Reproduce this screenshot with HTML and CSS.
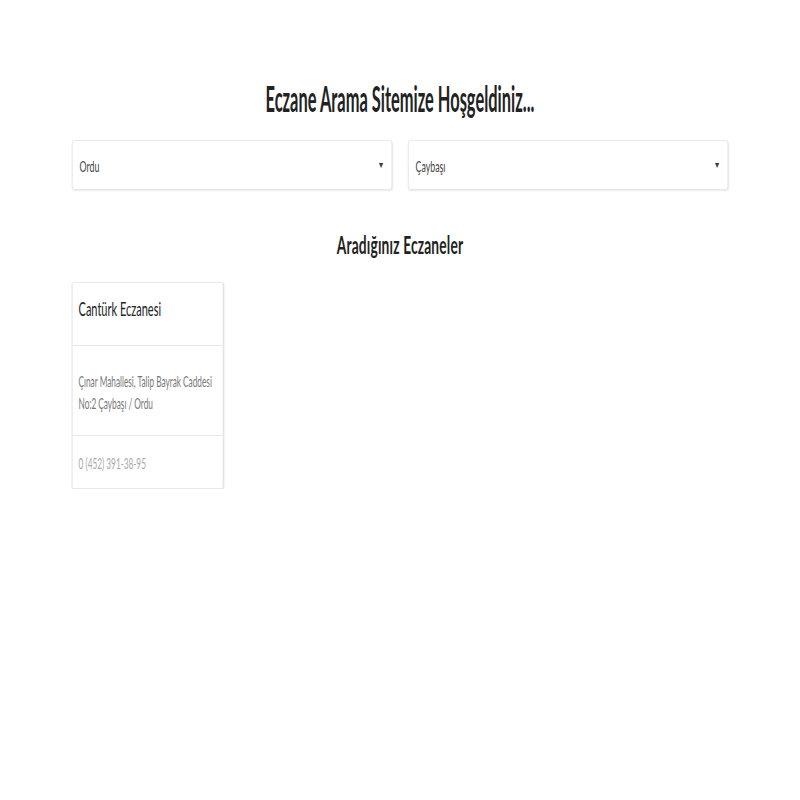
FILE: index.html
```html
<!DOCTYPE html>
<html lang="tr">
<head>
<meta charset="utf-8">
<title>Eczane Arama</title>
<link rel="stylesheet" href="styles.css">
</head>
<body>
<div class="page">
  <div class="container">
    <div class="inner">
      <h1 class="title">Eczane Arama Sitemize Hoşgeldiniz...</h1>
      <div class="filters">
        <div class="select"><span class="select-text">Ordu</span><span class="caret"></span></div>
        <div class="select"><span class="select-text">Çaybaşı</span><span class="caret"></span></div>
      </div>
      <h2 class="subtitle">Aradığınız Eczaneler</h2>
      <div class="cards">
        <div class="card">
          <div class="card-head">Cantürk Eczanesi</div>
          <div class="card-body">Çınar Mahallesi, Talip Bayrak Caddesi No:2 Çaybaşı / Ordu</div>
          <div class="card-foot">0 (452) 391-38-95</div>
        </div>
      </div>
    </div>
  </div>
</div>
</body>
</html>
```
FILE: styles.css
```css
:root {
  --k: 0.55;
}
html, body {
  margin: 0;
  padding: 0;
  background: #fff;
  overflow: hidden;
}
body {
  font-family: Lato, "Noto Sans", sans-serif;
  color: #333;
}
.page {
  display: flex;
  justify-content: center;
}
.container {
  width: 656px;
}
.inner {
  width: calc(656px / var(--k));
  transform: scaleX(var(--k));
  transform-origin: 0 0;
}
.title {
  margin: 78px 0 0;
  font-size: 36px;
  line-height: 40px;
  font-weight: 700;
  text-align: center;
  color: #222;
  transform: scaleX(0.83);
}
.filters {
  margin-top: 22px;
  display: grid;
  grid-template-columns: 1fr 1fr;
  column-gap: calc(16px / var(--k));
}
.select {
  height: 50px;
  box-sizing: border-box;
  display: flex;
  align-items: center;
  justify-content: space-between;
  padding: 0 calc(8px / var(--k)) 0 calc(7px / var(--k));
  background: #fff;
  border: 1px solid #e3e3e3;
  border-left-width: calc(1px / var(--k));
  border-right-width: calc(1px / var(--k));
  border-radius: 4px;
  box-shadow: 0 1px 2px rgba(0, 0, 0, 0.09);
  font-size: 16px;
  color: #444;
}
.caret {
  width: 0;
  height: 0;
  border-left: calc(2.5px / var(--k)) solid transparent;
  border-right: calc(2.5px / var(--k)) solid transparent;
  border-top: 5px solid #444;
}
.subtitle {
  margin: 41px 0 0;
  font-size: 25px;
  line-height: 27px;
  font-weight: 700;
  letter-spacing: 0.3px;
  text-align: center;
  color: #222;
}
.cards {
  margin-top: 24px;
  display: flex;
}
.card {
  width: calc(151px / var(--k));
  box-sizing: border-box;
  background: #fff;
  border: 1px solid #e6e6e6;
  border-left-width: calc(1px / var(--k));
  border-right-width: calc(1px / var(--k));
  border-radius: 3px;
  box-shadow: 0 1px 3px rgba(0, 0, 0, 0.15);
}
.card-head {
  padding: 13px calc(6px / var(--k)) 25px;
  font-size: 20px;
  line-height: 24px;
  color: #222;
  border-bottom: 1px solid #e8e8e8;
}
.card-body {
  padding: 24px calc(4px / var(--k)) 21px calc(6px / var(--k));
  font-size: 15px;
  line-height: 22px;
  color: #777;
  border-bottom: 1px solid #e8e8e8;
}
.card-foot {
  padding: 15px calc(6px / var(--k)) 13px;
  font-size: 15px;
  line-height: 24px;
  color: #aaa;
}
```
